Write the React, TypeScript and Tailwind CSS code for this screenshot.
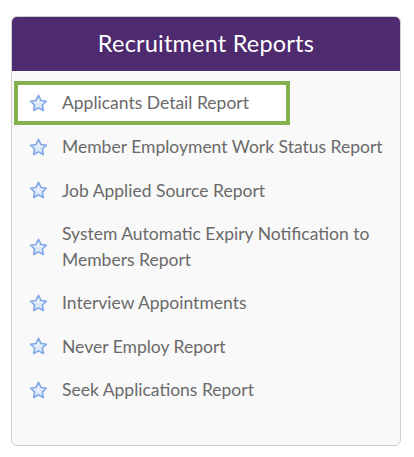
const reports = [
  { label: "Applicants Detail Report", active: true },
  { label: "Member Employment Work Status Report" },
  { label: "Job Applied Source Report" },
  { label: "System Automatic Expiry Notification to Members Report" },
  { label: "Interview Appointments" },
  { label: "Never Employ Report" },
  { label: "Seek Applications Report" },
];

function Star() {
  return (
    <svg width="19" height="18" viewBox="0 0 24 23" className="shrink-0">
      <defs>
        <linearGradient id="starfill" x1="0" y1="0" x2="0" y2="1">
          <stop offset="0" stopColor="#eef4fd" />
          <stop offset="1" stopColor="#d3e2f8" />
        </linearGradient>
      </defs>
      <path
        d="M12 1.8l3.1 6.4 7 1-5.1 4.9 1.2 7-6.2-3.3-6.2 3.3 1.2-7-5.1-4.9 7-1z"
        fill="url(#starfill)"
        stroke="#7ea6e6"
        strokeWidth="2"
        strokeLinejoin="round"
      />
    </svg>
  );
}

export default function App() {
  return (
    <div className="w-[414px] h-[457px] bg-white pt-[16px] pl-[11px]" style={{ fontFamily: "Lato, 'Open Sans', sans-serif" }}>
      <div className="w-[390px] h-[430px] rounded-[6px] border border-[#cfcfcf] bg-[#f9f9f9] overflow-hidden">
        {/* Header */}
        <div className="h-[54px] bg-[#4e2a6f] flex items-center justify-center">
          <h2 className="text-white text-[23.5px] tracking-[0.2px]">Recruitment Reports</h2>
        </div>

        {/* List */}
        <ul className="pt-[10px] pl-[2px]">
          {reports.map((r, i) => (
            <li
              key={i}
              className={
                r.active
                  ? "w-[276px] h-[44px] border-[4px] border-[#84b04f] bg-white flex items-center gap-[14px] pl-[11px]"
                  : "flex items-center gap-[14px] pl-[15px] pr-[16px] py-[9px]"
              }
            >
              <Star />
              <span className="text-[#6a6a6a] text-[17.5px] leading-[25.5px]">{r.label}</span>
            </li>
          ))}
        </ul>
      </div>
    </div>
  );
}
